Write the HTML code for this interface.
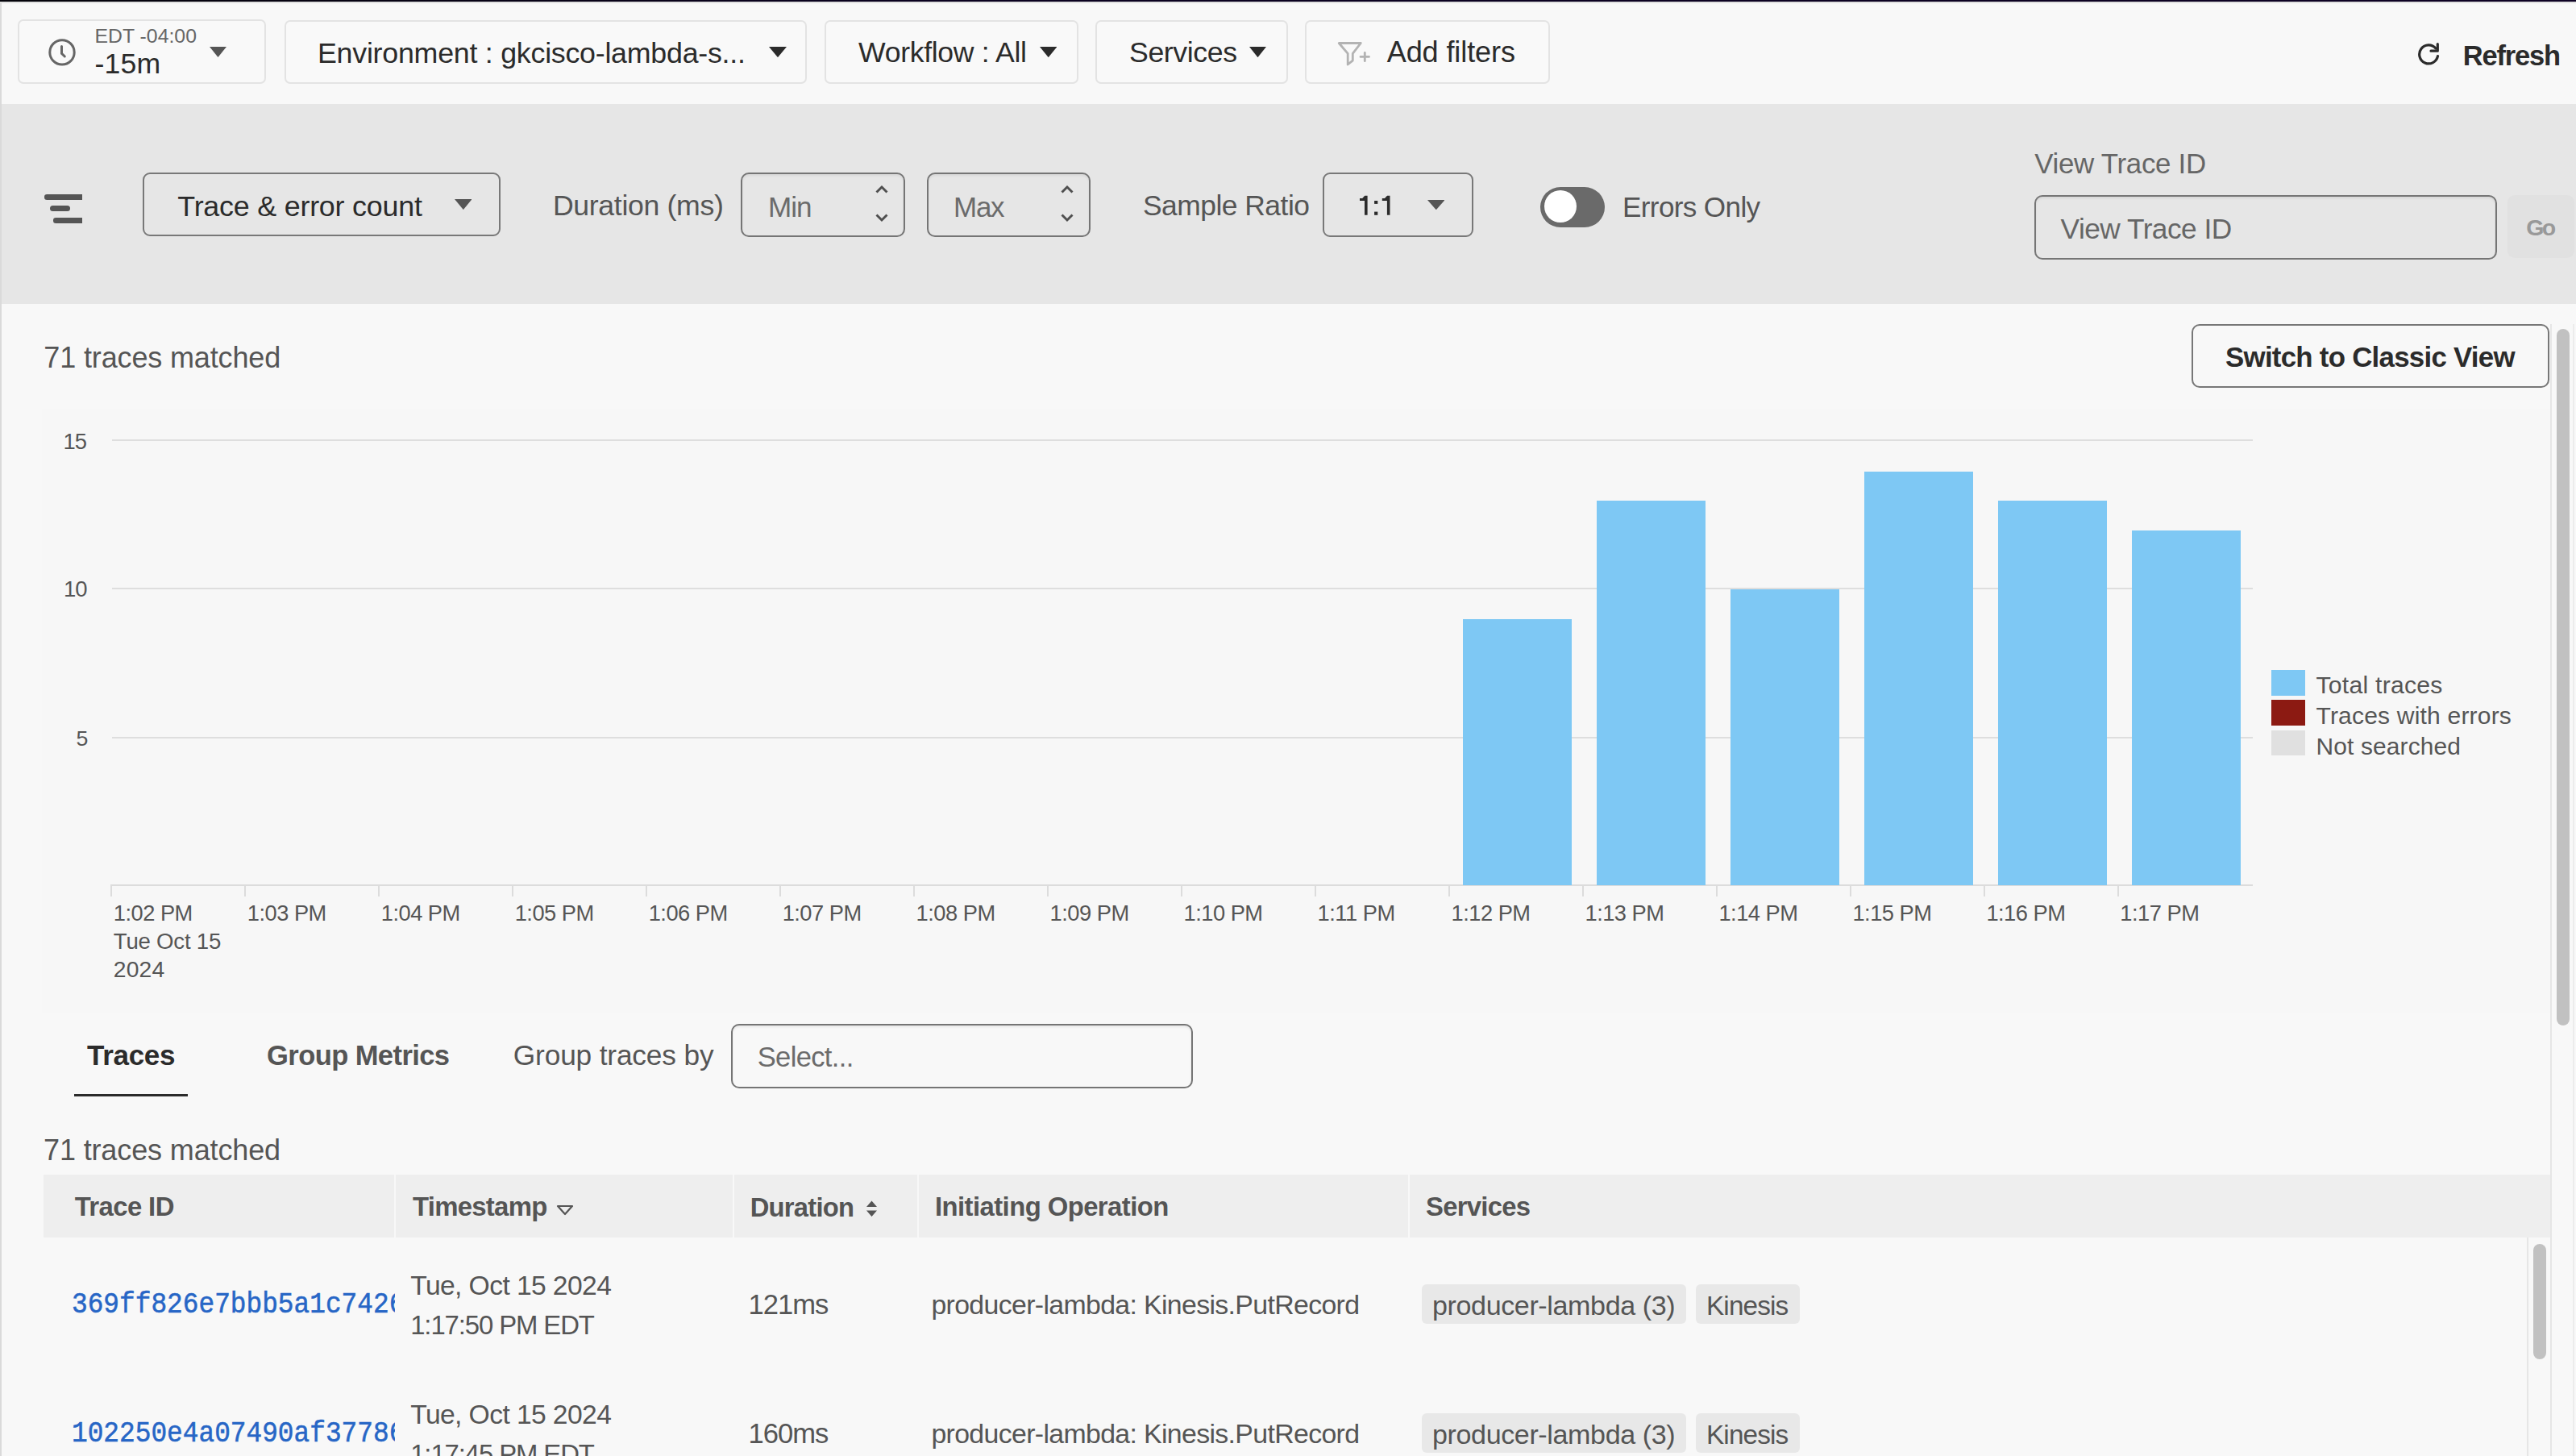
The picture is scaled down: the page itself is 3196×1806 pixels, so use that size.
<!DOCTYPE html>
<html><head><meta charset="utf-8"><style>
html,body{margin:0;padding:0}
body{width:3196px;height:1806px;overflow:hidden;position:relative;background:#f8f8f8;font-family:"Liberation Sans",sans-serif}
.t{position:absolute;white-space:nowrap}
</style></head><body>
<div style="position:absolute;left:0.00px;top:0.00px;width:3196.00px;height:2.00px;box-sizing:border-box;background:linear-gradient(90deg,#04030a 0%,#0b0220 35%,#0e0224 100%)"></div>
<div style="position:absolute;left:0.00px;top:2.00px;width:3196.00px;height:2.00px;box-sizing:border-box;background:#e0e0e0"></div>
<div style="position:absolute;left:0.00px;top:4.00px;width:2.00px;height:1802.00px;box-sizing:border-box;background:#dadada"></div>
<div style="position:absolute;left:22.00px;top:24.00px;width:308.00px;height:79.50px;box-sizing:border-box;border:2px solid #e3e3e3;border-radius:7px;background:#f9f9f9"></div>
<div style="position:absolute;left:352.50px;top:24.50px;width:648.00px;height:79.00px;box-sizing:border-box;border:2px solid #e3e3e3;border-radius:7px;background:#f9f9f9"></div>
<div style="position:absolute;left:1022.50px;top:24.50px;width:315.00px;height:79.00px;box-sizing:border-box;border:2px solid #e3e3e3;border-radius:7px;background:#f9f9f9"></div>
<div style="position:absolute;left:1359.00px;top:24.50px;width:238.50px;height:79.00px;box-sizing:border-box;border:2px solid #e3e3e3;border-radius:7px;background:#f9f9f9"></div>
<div style="position:absolute;left:1619.00px;top:24.50px;width:303.50px;height:79.00px;box-sizing:border-box;border:2px solid #e3e3e3;border-radius:7px;background:#f9f9f9"></div>
<svg style="position:absolute;left:59px;top:47px" width="36" height="36" viewBox="0 0 36 36"><circle cx="18" cy="17.9" r="15.2" fill="none" stroke="#666" stroke-width="3"/><path d="M17.5 10.4 V19.3 L21.3 23" fill="none" stroke="#666" stroke-width="3" stroke-linecap="round"/></svg>
<div class="t" style="left:117.50px;top:31.17px;font-size:24.78px;line-height:27.68px;letter-spacing:0.027px;color:#666;font-weight:normal;font-family:"Liberation Sans", sans-serif;-webkit-text-stroke:0.45px #666;">EDT -04:00</div>
<div class="t" style="left:117.50px;top:59.51px;font-size:35.67px;line-height:39.85px;letter-spacing:0.187px;color:#2b2b2b;font-weight:normal;font-family:"Liberation Sans", sans-serif;-webkit-text-stroke:0.45px #2b2b2b;">-15m</div>
<svg style="position:absolute;left:260px;top:57.7px" width="21" height="13.0" viewBox="0 0 21 13.0"><path d="M0 0 H21 L10.5 13.0 Z" fill="#555"/></svg>
<div class="t" style="left:394.00px;top:45.69px;font-size:35.8px;line-height:40.00px;letter-spacing:-0.257px;color:#2b2b2b;font-weight:normal;font-family:"Liberation Sans", sans-serif;-webkit-text-stroke:0.45px #2b2b2b;">Environment : gkcisco-lambda-s...</div>
<svg style="position:absolute;left:953.6px;top:57.5px" width="22.0" height="13.200000000000003" viewBox="0 0 22.0 13.200000000000003"><path d="M0 0 H22.0 L11.0 13.200000000000003 Z" fill="#2b2b2b"/></svg>
<div class="t" style="left:1065.00px;top:45.84px;font-size:35.64px;line-height:39.82px;letter-spacing:-0.324px;color:#2b2b2b;font-weight:normal;font-family:"Liberation Sans", sans-serif;-webkit-text-stroke:0.45px #2b2b2b;">Workflow : All</div>
<svg style="position:absolute;left:1289.6px;top:57.5px" width="21.40000000000009" height="13.200000000000003" viewBox="0 0 21.40000000000009 13.200000000000003"><path d="M0 0 H21.40000000000009 L10.700000000000045 13.200000000000003 Z" fill="#2b2b2b"/></svg>
<div class="t" style="left:1401.00px;top:45.82px;font-size:35.66px;line-height:39.84px;letter-spacing:-0.394px;color:#2b2b2b;font-weight:normal;font-family:"Liberation Sans", sans-serif;-webkit-text-stroke:0.45px #2b2b2b;">Services</div>
<svg style="position:absolute;left:1550px;top:57.5px" width="21" height="13.200000000000003" viewBox="0 0 21 13.200000000000003"><path d="M0 0 H21 L10.5 13.200000000000003 Z" fill="#2b2b2b"/></svg>
<svg style="position:absolute;left:1640px;top:40px" width="80" height="55" viewBox="0 0 80 55"><path d="M21.2 13.5 H48.3 L38.3 26.4 V35.1 L32.2 40 V26.4 Z" fill="none" stroke="#b3b3b3" stroke-width="2.8" stroke-linejoin="round"/><path d="M53.3 25.3 V35.7 M48 30.4 H58.5" stroke="#b3b3b3" stroke-width="2.8" stroke-linecap="round"/></svg>
<div class="t" style="left:1720.70px;top:45.45px;font-size:36.07px;line-height:40.30px;letter-spacing:-0.112px;color:#2b2b2b;font-weight:normal;font-family:"Liberation Sans", sans-serif;-webkit-text-stroke:0.45px #2b2b2b;">Add filters</div>
<svg style="position:absolute;left:2999px;top:52px" width="30" height="30" viewBox="0 0 30 30"><path d="M25.5 17.5 A11.5 11.5 0 1 1 23 8" fill="none" stroke="#2b2b2b" stroke-width="3.2" stroke-linecap="round"/><path d="M25.3 2.6 V11.2 H17" fill="none" stroke="#2b2b2b" stroke-width="3.2" stroke-linecap="round" stroke-linejoin="round"/></svg>
<div class="t" style="left:3055.70px;top:49.50px;font-size:34.47px;line-height:38.51px;letter-spacing:-1.183px;color:#2b2b2b;font-weight:bold;font-family:"Liberation Sans", sans-serif;-webkit-text-stroke:0.2px #2b2b2b;">Refresh</div>
<div style="position:absolute;left:2.00px;top:129.00px;width:3194.00px;height:248.00px;box-sizing:border-box;background:#e6e6e6"></div>
<div style="position:absolute;left:55px;top:241px;width:47px;height:6.6px;background:#555;border-radius:3.3px 0 0 3.3px"></div><div style="position:absolute;left:62px;top:255.3px;width:25px;height:7.2px;background:#555;border-radius:3.6px"></div><div style="position:absolute;left:66px;top:270.4px;width:36px;height:6.6px;background:#555;border-radius:3.3px 0 0 3.3px"></div>
<div style="position:absolute;left:177.30px;top:214.30px;width:444.00px;height:79.20px;box-sizing:border-box;border:2px solid #787878;border-radius:9px"></div>
<div class="t" style="left:220.30px;top:235.63px;font-size:35.87px;line-height:40.07px;letter-spacing:-0.221px;color:#2b2b2b;font-weight:normal;font-family:"Liberation Sans", sans-serif;-webkit-text-stroke:0.45px #2b2b2b;">Trace &amp; error count</div>
<svg style="position:absolute;left:563.7px;top:247.3px" width="21.699999999999932" height="13.099999999999966" viewBox="0 0 21.699999999999932 13.099999999999966"><path d="M0 0 H21.699999999999932 L10.849999999999966 13.099999999999966 Z" fill="#555"/></svg>
<div class="t" style="left:685.90px;top:236.12px;font-size:35.66px;line-height:39.84px;letter-spacing:-0.334px;color:#555555;font-weight:normal;font-family:"Liberation Sans", sans-serif;-webkit-text-stroke:0.45px #555555;">Duration (ms)</div>
<div style="position:absolute;left:919.40px;top:214.00px;width:203.60px;height:80.00px;box-sizing:border-box;border:2px solid #757575;border-radius:10px;box-shadow:inset 0 2px 3px rgba(0,0,0,0.07)"></div>
<div class="t" style="left:953.00px;top:236.60px;font-size:35.13px;line-height:39.25px;letter-spacing:-1.024px;color:#6b6b6b;font-weight:normal;font-family:"Liberation Sans", sans-serif;-webkit-text-stroke:0.45px #6b6b6b;">Min</div>
<div style="position:absolute;left:1149.80px;top:214.00px;width:203.40px;height:80.00px;box-sizing:border-box;border:2px solid #757575;border-radius:10px;box-shadow:inset 0 2px 3px rgba(0,0,0,0.07)"></div>
<div class="t" style="left:1183.00px;top:236.72px;font-size:34.99px;line-height:39.09px;letter-spacing:-1.266px;color:#6b6b6b;font-weight:normal;font-family:"Liberation Sans", sans-serif;-webkit-text-stroke:0.45px #6b6b6b;">Max</div>
<svg style="position:absolute;left:1086px;top:229px" width="16" height="48" viewBox="0 0 16 48"><path d="M1.5 9.5 L8 3 L14.5 9.5" fill="none" stroke="#4f4f4f" stroke-width="2.9"/><path d="M1.5 37.5 L8 44 L14.5 37.5" fill="none" stroke="#4f4f4f" stroke-width="2.9"/></svg>
<svg style="position:absolute;left:1316px;top:229px" width="16" height="48" viewBox="0 0 16 48"><path d="M1.5 9.5 L8 3 L14.5 9.5" fill="none" stroke="#4f4f4f" stroke-width="2.9"/><path d="M1.5 37.5 L8 44 L14.5 37.5" fill="none" stroke="#4f4f4f" stroke-width="2.9"/></svg>
<div class="t" style="left:1417.90px;top:236.33px;font-size:35.43px;line-height:39.58px;letter-spacing:-0.506px;color:#555555;font-weight:normal;font-family:"Liberation Sans", sans-serif;-webkit-text-stroke:0.45px #555555;">Sample Ratio</div>
<div style="position:absolute;left:1641.30px;top:214.00px;width:186.70px;height:79.60px;box-sizing:border-box;border:2px solid #787878;border-radius:9px"></div>
<svg style="position:absolute;left:1680px;top:240px" width="50" height="30" viewBox="0 0 50 30"><path fill="#2b2b2b" d="M7 5.9 H10.2 L13.2 2.8 H16.6 V26.8 H13 V8.9 H7 Z M34.8 5.9 H38 L41 2.8 H44.5 V26.8 H40.9 V8.9 H34.8 Z"/><rect x="25.1" y="9" width="4.2" height="3.9" fill="#2b2b2b"/><rect x="25.1" y="22.6" width="4.2" height="4.2" fill="#2b2b2b"/></svg>
<svg style="position:absolute;left:1770.7px;top:247.7px" width="21.59999999999991" height="12.300000000000011" viewBox="0 0 21.59999999999991 12.300000000000011"><path d="M0 0 H21.59999999999991 L10.799999999999955 12.300000000000011 Z" fill="#555"/></svg>
<div style="position:absolute;left:1911.00px;top:231.70px;width:80.00px;height:50.30px;box-sizing:border-box;background:#6a6a6a;border-radius:25px"></div>
<div style="position:absolute;left:1916.2px;top:236.2px;width:40px;height:40px;border-radius:50%;background:#fff"></div>
<div class="t" style="left:2013.00px;top:236.63px;font-size:35.09px;line-height:39.20px;letter-spacing:-0.627px;color:#555555;font-weight:normal;font-family:"Liberation Sans", sans-serif;-webkit-text-stroke:0.45px #555555;">Errors Only</div>
<div class="t" style="left:2524.20px;top:183.22px;font-size:34.89px;line-height:38.98px;letter-spacing:-0.29px;color:#666;font-weight:normal;font-family:"Liberation Sans", sans-serif;-webkit-text-stroke:0.45px #666;">View Trace ID</div>
<div style="position:absolute;left:2523.60px;top:242.00px;width:574.00px;height:80.00px;box-sizing:border-box;border:2px solid #757575;border-radius:10px;box-shadow:inset 0 2px 3px rgba(0,0,0,0.07)"></div>
<div class="t" style="left:2556.50px;top:264.14px;font-size:35.3px;line-height:39.44px;letter-spacing:-0.527px;color:#666;font-weight:normal;font-family:"Liberation Sans", sans-serif;-webkit-text-stroke:0.45px #666;">View Trace ID</div>
<div style="position:absolute;left:3111.30px;top:242.00px;width:82.70px;height:77.60px;box-sizing:border-box;background:#e1e1e1;border-radius:9px"></div>
<div class="t" style="left:3134.30px;top:267.04px;font-size:28.46px;line-height:31.80px;letter-spacing:-2.788px;color:#999;font-weight:bold;font-family:"Liberation Sans", sans-serif;">Go</div>
<div style="position:absolute;left:52.00px;top:507.00px;width:3112.00px;height:749.00px;box-sizing:border-box;background:#f7f7f7"></div>
<div class="t" style="left:54.30px;top:423.57px;font-size:36.04px;line-height:40.26px;letter-spacing:-0.151px;color:#555555;font-weight:normal;font-family:"Liberation Sans", sans-serif;-webkit-text-stroke:0.45px #555555;">71 traces matched</div>
<div style="position:absolute;left:2718.50px;top:402.40px;width:444.90px;height:79.10px;box-sizing:border-box;border:2px solid #777;border-radius:10px"></div>
<div class="t" style="left:2761.00px;top:424.32px;font-size:34.88px;line-height:38.97px;letter-spacing:-0.752px;color:#2b2b2b;font-weight:bold;font-family:"Liberation Sans", sans-serif;-webkit-text-stroke:0.2px #2b2b2b;">Switch to Classic View</div>
<div style="position:absolute;left:3164.20px;top:402.00px;width:1.60px;height:1404.00px;box-sizing:border-box;background:#e6e6e6"></div>
<div style="position:absolute;left:3172.00px;top:408.00px;width:16.00px;height:863.50px;box-sizing:border-box;background:#c1c1c1;border-radius:8px"></div>
<div style="position:absolute;left:3192.00px;top:402.00px;width:2.00px;height:1404.00px;box-sizing:border-box;background:#ececec"></div>
<div style="position:absolute;left:139.40px;top:544.50px;width:2655.20px;height:2.00px;box-sizing:border-box;background:#dedede"></div>
<div style="position:absolute;left:139.40px;top:729.40px;width:2655.20px;height:2.00px;box-sizing:border-box;background:#dedede"></div>
<div style="position:absolute;left:139.40px;top:914.00px;width:2655.20px;height:2.00px;box-sizing:border-box;background:#dedede"></div>
<div style="position:absolute;left:137.50px;top:1097.00px;width:2657.10px;height:2.20px;box-sizing:border-box;background:#dcdcdc"></div>
<div style="position:absolute;left:137.20px;top:1097.00px;width:2.20px;height:14.50px;box-sizing:border-box;background:#dcdcdc"></div>
<div class="t" style="left:140.80px;top:1118.10px;font-size:27.28px;line-height:30.48px;letter-spacing:-0.503px;color:#555555;font-weight:normal;font-family:"Liberation Sans", sans-serif;-webkit-text-stroke:0.45px #555555;">1:02 PM</div>
<div style="position:absolute;left:303.17px;top:1097.00px;width:2.20px;height:14.50px;box-sizing:border-box;background:#dcdcdc"></div>
<div class="t" style="left:306.77px;top:1118.10px;font-size:27.28px;line-height:30.48px;letter-spacing:-0.503px;color:#555555;font-weight:normal;font-family:"Liberation Sans", sans-serif;-webkit-text-stroke:0.45px #555555;">1:03 PM</div>
<div style="position:absolute;left:469.14px;top:1097.00px;width:2.20px;height:14.50px;box-sizing:border-box;background:#dcdcdc"></div>
<div class="t" style="left:472.74px;top:1118.10px;font-size:27.28px;line-height:30.48px;letter-spacing:-0.503px;color:#555555;font-weight:normal;font-family:"Liberation Sans", sans-serif;-webkit-text-stroke:0.45px #555555;">1:04 PM</div>
<div style="position:absolute;left:635.11px;top:1097.00px;width:2.20px;height:14.50px;box-sizing:border-box;background:#dcdcdc"></div>
<div class="t" style="left:638.71px;top:1118.10px;font-size:27.28px;line-height:30.48px;letter-spacing:-0.503px;color:#555555;font-weight:normal;font-family:"Liberation Sans", sans-serif;-webkit-text-stroke:0.45px #555555;">1:05 PM</div>
<div style="position:absolute;left:801.08px;top:1097.00px;width:2.20px;height:14.50px;box-sizing:border-box;background:#dcdcdc"></div>
<div class="t" style="left:804.68px;top:1118.10px;font-size:27.28px;line-height:30.48px;letter-spacing:-0.503px;color:#555555;font-weight:normal;font-family:"Liberation Sans", sans-serif;-webkit-text-stroke:0.45px #555555;">1:06 PM</div>
<div style="position:absolute;left:967.05px;top:1097.00px;width:2.20px;height:14.50px;box-sizing:border-box;background:#dcdcdc"></div>
<div class="t" style="left:970.65px;top:1118.10px;font-size:27.28px;line-height:30.48px;letter-spacing:-0.503px;color:#555555;font-weight:normal;font-family:"Liberation Sans", sans-serif;-webkit-text-stroke:0.45px #555555;">1:07 PM</div>
<div style="position:absolute;left:1133.02px;top:1097.00px;width:2.20px;height:14.50px;box-sizing:border-box;background:#dcdcdc"></div>
<div class="t" style="left:1136.62px;top:1118.10px;font-size:27.28px;line-height:30.48px;letter-spacing:-0.503px;color:#555555;font-weight:normal;font-family:"Liberation Sans", sans-serif;-webkit-text-stroke:0.45px #555555;">1:08 PM</div>
<div style="position:absolute;left:1298.99px;top:1097.00px;width:2.20px;height:14.50px;box-sizing:border-box;background:#dcdcdc"></div>
<div class="t" style="left:1302.59px;top:1118.10px;font-size:27.28px;line-height:30.48px;letter-spacing:-0.503px;color:#555555;font-weight:normal;font-family:"Liberation Sans", sans-serif;-webkit-text-stroke:0.45px #555555;">1:09 PM</div>
<div style="position:absolute;left:1464.96px;top:1097.00px;width:2.20px;height:14.50px;box-sizing:border-box;background:#dcdcdc"></div>
<div class="t" style="left:1468.56px;top:1118.10px;font-size:27.28px;line-height:30.48px;letter-spacing:-0.503px;color:#555555;font-weight:normal;font-family:"Liberation Sans", sans-serif;-webkit-text-stroke:0.45px #555555;">1:10 PM</div>
<div style="position:absolute;left:1630.93px;top:1097.00px;width:2.20px;height:14.50px;box-sizing:border-box;background:#dcdcdc"></div>
<div class="t" style="left:1634.53px;top:1118.10px;font-size:27.28px;line-height:30.48px;letter-spacing:-0.471px;color:#555555;font-weight:normal;font-family:"Liberation Sans", sans-serif;-webkit-text-stroke:0.45px #555555;">1:11 PM</div>
<div style="position:absolute;left:1796.90px;top:1097.00px;width:2.20px;height:14.50px;box-sizing:border-box;background:#dcdcdc"></div>
<div class="t" style="left:1800.50px;top:1118.10px;font-size:27.28px;line-height:30.48px;letter-spacing:-0.503px;color:#555555;font-weight:normal;font-family:"Liberation Sans", sans-serif;-webkit-text-stroke:0.45px #555555;">1:12 PM</div>
<div style="position:absolute;left:1815.30px;top:767.95px;width:135.00px;height:329.85px;box-sizing:border-box;background:#7ec8f4"></div>
<div style="position:absolute;left:1962.87px;top:1097.00px;width:2.20px;height:14.50px;box-sizing:border-box;background:#dcdcdc"></div>
<div class="t" style="left:1966.47px;top:1118.10px;font-size:27.28px;line-height:30.48px;letter-spacing:-0.503px;color:#555555;font-weight:normal;font-family:"Liberation Sans", sans-serif;-webkit-text-stroke:0.45px #555555;">1:13 PM</div>
<div style="position:absolute;left:1981.27px;top:621.35px;width:135.00px;height:476.45px;box-sizing:border-box;background:#7ec8f4"></div>
<div style="position:absolute;left:2128.84px;top:1097.00px;width:2.20px;height:14.50px;box-sizing:border-box;background:#dcdcdc"></div>
<div class="t" style="left:2132.44px;top:1118.10px;font-size:27.28px;line-height:30.48px;letter-spacing:-0.503px;color:#555555;font-weight:normal;font-family:"Liberation Sans", sans-serif;-webkit-text-stroke:0.45px #555555;">1:14 PM</div>
<div style="position:absolute;left:2147.24px;top:731.30px;width:135.00px;height:366.50px;box-sizing:border-box;background:#7ec8f4"></div>
<div style="position:absolute;left:2294.81px;top:1097.00px;width:2.20px;height:14.50px;box-sizing:border-box;background:#dcdcdc"></div>
<div class="t" style="left:2298.41px;top:1118.10px;font-size:27.28px;line-height:30.48px;letter-spacing:-0.503px;color:#555555;font-weight:normal;font-family:"Liberation Sans", sans-serif;-webkit-text-stroke:0.45px #555555;">1:15 PM</div>
<div style="position:absolute;left:2313.21px;top:584.70px;width:135.00px;height:513.10px;box-sizing:border-box;background:#7ec8f4"></div>
<div style="position:absolute;left:2460.78px;top:1097.00px;width:2.20px;height:14.50px;box-sizing:border-box;background:#dcdcdc"></div>
<div class="t" style="left:2464.38px;top:1118.10px;font-size:27.28px;line-height:30.48px;letter-spacing:-0.503px;color:#555555;font-weight:normal;font-family:"Liberation Sans", sans-serif;-webkit-text-stroke:0.45px #555555;">1:16 PM</div>
<div style="position:absolute;left:2479.18px;top:621.35px;width:135.00px;height:476.45px;box-sizing:border-box;background:#7ec8f4"></div>
<div style="position:absolute;left:2626.75px;top:1097.00px;width:2.20px;height:14.50px;box-sizing:border-box;background:#dcdcdc"></div>
<div class="t" style="left:2630.35px;top:1118.10px;font-size:27.28px;line-height:30.48px;letter-spacing:-0.503px;color:#555555;font-weight:normal;font-family:"Liberation Sans", sans-serif;-webkit-text-stroke:0.45px #555555;">1:17 PM</div>
<div style="position:absolute;left:2645.15px;top:658.00px;width:135.00px;height:439.80px;box-sizing:border-box;background:#7ec8f4"></div>
<div class="t" style="left:140.80px;top:1152.80px;font-size:27.62px;line-height:30.86px;letter-spacing:-0.235px;color:#555555;font-weight:normal;font-family:"Liberation Sans", sans-serif;-webkit-text-stroke:0.45px #555555;">Tue Oct 15</div>
<div class="t" style="left:140.80px;top:1187.47px;font-size:28.31px;line-height:31.63px;letter-spacing:0.137px;color:#555555;font-weight:normal;font-family:"Liberation Sans", sans-serif;-webkit-text-stroke:0.45px #555555;">2024</div>
<div class="t" style="left:78.60px;top:533.35px;font-size:27.34px;line-height:30.54px;letter-spacing:-1.016px;color:#555555;font-weight:normal;font-family:"Liberation Sans", sans-serif;-webkit-text-stroke:0.45px #555555;">15</div>
<div class="t" style="left:78.90px;top:715.92px;font-size:27.48px;line-height:30.70px;letter-spacing:-0.872px;color:#555555;font-weight:normal;font-family:"Liberation Sans", sans-serif;-webkit-text-stroke:0.45px #555555;">10</div>
<div class="t" style="left:94.50px;top:901.64px;font-size:26.69px;line-height:29.82px;letter-spacing:0px;color:#555555;font-weight:normal;font-family:"Liberation Sans", sans-serif;-webkit-text-stroke:0.45px #555555;">5</div>
<div style="position:absolute;left:2818.20px;top:831.00px;width:42.10px;height:32.20px;box-sizing:border-box;background:#7ec8f4"></div>
<div style="position:absolute;left:2818.20px;top:868.20px;width:42.10px;height:31.80px;box-sizing:border-box;background:#8c1a12"></div>
<div style="position:absolute;left:2818.20px;top:905.80px;width:42.10px;height:31.70px;box-sizing:border-box;background:#e0e0e0"></div>
<div class="t" style="left:2873.50px;top:833.48px;font-size:30.18px;line-height:33.72px;letter-spacing:0.237px;color:#555555;font-weight:normal;font-family:"Liberation Sans", sans-serif;-webkit-text-stroke:0.45px #555555;">Total traces</div>
<div class="t" style="left:2873.50px;top:870.79px;font-size:30.06px;line-height:33.58px;letter-spacing:0.181px;color:#555555;font-weight:normal;font-family:"Liberation Sans", sans-serif;-webkit-text-stroke:0.45px #555555;">Traces with errors</div>
<div class="t" style="left:2873.50px;top:908.52px;font-size:29.91px;line-height:33.42px;letter-spacing:0.146px;color:#555555;font-weight:normal;font-family:"Liberation Sans", sans-serif;-webkit-text-stroke:0.45px #555555;">Not searched</div>
<div class="t" style="left:108.10px;top:1289.46px;font-size:35.06px;line-height:39.17px;letter-spacing:-0.348px;color:#2b2b2b;font-weight:bold;font-family:"Liberation Sans", sans-serif;-webkit-text-stroke:0.2px #2b2b2b;">Traces</div>
<div style="position:absolute;left:92.40px;top:1357.00px;width:140.60px;height:3.00px;box-sizing:border-box;background:#2b2b2b"></div>
<div class="t" style="left:331.00px;top:1289.91px;font-size:34.56px;line-height:38.61px;letter-spacing:-0.593px;color:#555555;font-weight:bold;font-family:"Liberation Sans", sans-serif;-webkit-text-stroke:0.2px #555555;">Group Metrics</div>
<div class="t" style="left:636.80px;top:1289.24px;font-size:35.3px;line-height:39.44px;letter-spacing:-0.169px;color:#555555;font-weight:normal;font-family:"Liberation Sans", sans-serif;-webkit-text-stroke:0.45px #555555;">Group traces by</div>
<div style="position:absolute;left:906.50px;top:1270.00px;width:573.50px;height:80.00px;box-sizing:border-box;border:2px solid #757575;border-radius:10px;box-shadow:inset 0 2px 3px rgba(0,0,0,0.07)"></div>
<div class="t" style="left:939.70px;top:1292.39px;font-size:34.59px;line-height:38.64px;letter-spacing:-0.67px;color:#6b6b6b;font-weight:normal;font-family:"Liberation Sans", sans-serif;-webkit-text-stroke:0.45px #6b6b6b;">Select...</div>
<div class="t" style="left:54.00px;top:1407.37px;font-size:36.04px;line-height:40.26px;letter-spacing:-0.145px;color:#555555;font-weight:normal;font-family:"Liberation Sans", sans-serif;-webkit-text-stroke:0.45px #555555;">71 traces matched</div>
<div style="position:absolute;left:54.00px;top:1457.00px;width:3110.00px;height:78.00px;box-sizing:border-box;background:#eeeeee"></div>
<div style="position:absolute;left:489.30px;top:1457.00px;width:2.00px;height:78.00px;box-sizing:border-box;background:#f8f8f8"></div>
<div style="position:absolute;left:908.50px;top:1457.00px;width:2.00px;height:78.00px;box-sizing:border-box;background:#f8f8f8"></div>
<div style="position:absolute;left:1137.50px;top:1457.00px;width:2.00px;height:78.00px;box-sizing:border-box;background:#f8f8f8"></div>
<div style="position:absolute;left:1746.80px;top:1457.00px;width:2.00px;height:78.00px;box-sizing:border-box;background:#f8f8f8"></div>
<div class="t" style="left:92.70px;top:1479.40px;font-size:32.92px;line-height:36.78px;letter-spacing:-0.62px;color:#555555;font-weight:bold;font-family:"Liberation Sans", sans-serif;-webkit-text-stroke:0.2px #555555;">Trace ID</div>
<div class="t" style="left:512.00px;top:1479.40px;font-size:32.92px;line-height:36.78px;letter-spacing:-0.73px;color:#555555;font-weight:bold;font-family:"Liberation Sans", sans-serif;-webkit-text-stroke:0.2px #555555;">Timestamp</div>
<svg style="position:absolute;left:690px;top:1494px" width="22" height="14" viewBox="0 0 22 14"><path d="M2 2 H20 L11 12 Z" fill="none" stroke="#555" stroke-width="2.2" stroke-linejoin="round"/></svg>
<div class="t" style="left:930.70px;top:1479.56px;font-size:32.74px;line-height:36.58px;letter-spacing:-0.752px;color:#555555;font-weight:bold;font-family:"Liberation Sans", sans-serif;-webkit-text-stroke:0.2px #555555;">Duration</div>
<svg style="position:absolute;left:1074px;top:1489px" width="15" height="21" viewBox="0 0 15 21"><path d="M7.5 0.5 L14 8 H1 Z M1 12.5 H14 L7.5 20 Z" fill="#555"/></svg>
<div class="t" style="left:1160.00px;top:1479.48px;font-size:32.83px;line-height:36.68px;letter-spacing:-0.562px;color:#555555;font-weight:bold;font-family:"Liberation Sans", sans-serif;-webkit-text-stroke:0.2px #555555;">Initiating Operation</div>
<div class="t" style="left:1769.00px;top:1479.49px;font-size:32.82px;line-height:36.67px;letter-spacing:-0.722px;color:#555555;font-weight:bold;font-family:"Liberation Sans", sans-serif;-webkit-text-stroke:0.2px #555555;">Services</div>
<div style="position:absolute;left:3135.00px;top:1535.00px;width:2.00px;height:271.00px;box-sizing:border-box;background:#e6e6e6"></div>
<div style="position:absolute;left:3142.50px;top:1542.50px;width:16.50px;height:143.20px;box-sizing:border-box;background:#c1c1c1;border-radius:8px"></div>
<div style="position:absolute;left:90px;top:1592px;width:400px;height:56px;overflow:hidden;white-space:nowrap"><span style="display:inline-block;font-family:'Liberation Mono',monospace;font-size:32.8px;line-height:56px;color:#2766c6;position:relative;left:-1px;transform:scaleY(1.13);transform-origin:0 39px;-webkit-text-stroke:0.5px #2766c6">369ff826e7bbb5a1c7426dd1b</span></div>
<div class="t" style="left:509.20px;top:1575.60px;font-size:33.69px;line-height:37.64px;letter-spacing:-0.612px;color:#555555;font-weight:normal;font-family:"Liberation Sans", sans-serif;-webkit-text-stroke:0.45px #555555;">Tue, Oct 15 2024</div>
<div class="t" style="left:509.20px;top:1625.80px;font-size:32.92px;line-height:36.78px;letter-spacing:-1.12px;color:#555555;font-weight:normal;font-family:"Liberation Sans", sans-serif;-webkit-text-stroke:0.45px #555555;">1:17:50 PM EDT</div>
<div class="t" style="left:928.50px;top:1599.48px;font-size:34.6px;line-height:38.65px;letter-spacing:-0.997px;color:#555555;font-weight:normal;font-family:"Liberation Sans", sans-serif;-webkit-text-stroke:0.45px #555555;">121ms</div>
<div class="t" style="left:1155.40px;top:1600.35px;font-size:33.86px;line-height:37.83px;letter-spacing:-0.656px;color:#555555;font-weight:normal;font-family:"Liberation Sans", sans-serif;-webkit-text-stroke:0.45px #555555;">producer-lambda: Kinesis.PutRecord</div>
<div style="position:absolute;left:1763.90px;top:1592.90px;width:328.10px;height:49.60px;box-sizing:border-box;background:#e8e8e8;border-radius:6px"></div>
<div class="t" style="left:1777.00px;top:1600.13px;font-size:34.1px;line-height:38.10px;letter-spacing:-0.391px;color:#555555;font-weight:normal;font-family:"Liberation Sans", sans-serif;-webkit-text-stroke:0.45px #555555;">producer-lambda (3)</div>
<div style="position:absolute;left:2103.90px;top:1592.90px;width:129.40px;height:49.60px;box-sizing:border-box;background:#e8e8e8;border-radius:6px"></div>
<div class="t" style="left:2117.00px;top:1600.85px;font-size:33.31px;line-height:37.21px;letter-spacing:-0.857px;color:#555555;font-weight:normal;font-family:"Liberation Sans", sans-serif;-webkit-text-stroke:0.45px #555555;">Kinesis</div>
<div style="position:absolute;left:90px;top:1752px;width:400px;height:56px;overflow:hidden;white-space:nowrap"><span style="display:inline-block;font-family:'Liberation Mono',monospace;font-size:32.8px;line-height:56px;color:#2766c6;position:relative;left:-1px;transform:scaleY(1.13);transform-origin:0 39px;-webkit-text-stroke:0.5px #2766c6">102250e4a07490af37786dd1b</span></div>
<div class="t" style="left:509.20px;top:1735.60px;font-size:33.69px;line-height:37.64px;letter-spacing:-0.612px;color:#555555;font-weight:normal;font-family:"Liberation Sans", sans-serif;-webkit-text-stroke:0.45px #555555;">Tue, Oct 15 2024</div>
<div class="t" style="left:509.20px;top:1785.80px;font-size:32.92px;line-height:36.78px;letter-spacing:-1.12px;color:#555555;font-weight:normal;font-family:"Liberation Sans", sans-serif;-webkit-text-stroke:0.45px #555555;">1:17:45 PM EDT</div>
<div class="t" style="left:928.50px;top:1759.48px;font-size:34.6px;line-height:38.65px;letter-spacing:-0.997px;color:#555555;font-weight:normal;font-family:"Liberation Sans", sans-serif;-webkit-text-stroke:0.45px #555555;">160ms</div>
<div class="t" style="left:1155.40px;top:1760.35px;font-size:33.86px;line-height:37.83px;letter-spacing:-0.656px;color:#555555;font-weight:normal;font-family:"Liberation Sans", sans-serif;-webkit-text-stroke:0.45px #555555;">producer-lambda: Kinesis.PutRecord</div>
<div style="position:absolute;left:1763.90px;top:1752.90px;width:328.10px;height:49.60px;box-sizing:border-box;background:#e8e8e8;border-radius:6px"></div>
<div class="t" style="left:1777.00px;top:1760.13px;font-size:34.1px;line-height:38.10px;letter-spacing:-0.391px;color:#555555;font-weight:normal;font-family:"Liberation Sans", sans-serif;-webkit-text-stroke:0.45px #555555;">producer-lambda (3)</div>
<div style="position:absolute;left:2103.90px;top:1752.90px;width:129.40px;height:49.60px;box-sizing:border-box;background:#e8e8e8;border-radius:6px"></div>
<div class="t" style="left:2117.00px;top:1760.85px;font-size:33.31px;line-height:37.21px;letter-spacing:-0.857px;color:#555555;font-weight:normal;font-family:"Liberation Sans", sans-serif;-webkit-text-stroke:0.45px #555555;">Kinesis</div>
</body></html>
